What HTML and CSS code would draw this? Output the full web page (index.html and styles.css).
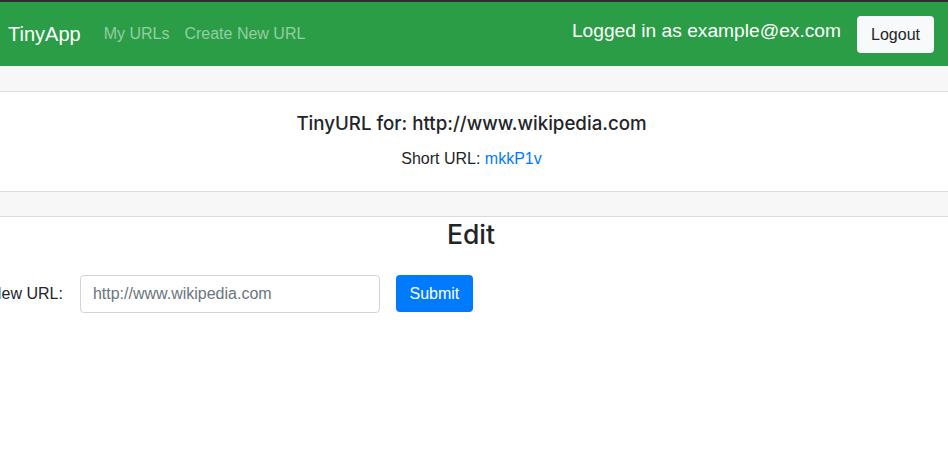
FILE: index.html
```html
<!DOCTYPE html>
<html>
<head>
<meta charset="utf-8">
<link rel="stylesheet" href="styles.css">
</head>
<body>
<nav class="navbar">
  <div class="nav-left">
    <a class="brand" href="#">TinyApp</a>
    <a class="nav-link" href="#">My URLs</a>
    <a class="nav-link" href="#">Create New URL</a>
  </div>
  <div class="nav-right">
    <span class="user">Logged in as example@ex.com</span>
    <button class="btn btn-light">Logout</button>
  </div>
</nav>
<div class="card">
  <div class="card-header"></div>
  <div class="card-body">
    <h5 class="card-title">TinyURL for: http://www.wikipedia.com</h5>
    <p class="card-text">Short URL: <a href="#">mkkP1v</a></p>
  </div>
  <div class="card-footer"></div>
</div>
<main class="edit">
  <h3 class="edit-title">Edit</h3>
  <form class="edit-form">
    <label class="label">New URL:</label>
    <input class="input" type="text" placeholder="http://www.wikipedia.com">
    <button class="btn btn-primary" type="button">Submit</button>
  </form>
</main>
</body>
</html>
```
FILE: styles.css
```css
html, body {
  margin: 0;
  padding: 0;
  background: #fff;
  overflow: hidden;
}
body {
  font-family: "Liberation Sans", Arial, sans-serif;
  font-size: 16px;
  line-height: 1.5;
  color: #212529;
}
a { text-decoration: none; }

.navbar {
  display: flex;
  align-items: center;
  justify-content: space-between;
  height: 64px;
  border-top: 2px solid #2c2c30;
  background: #2a9d46;
  padding: 0 14px 0 8px;
}
.nav-left { display: flex; align-items: center; }
.brand {
  color: #fff;
  font-size: 20px;
  margin-right: 23px;
}
.nav-link {
  color: rgba(255,255,255,.5);
  font-size: 16px;
  margin-right: 15px;
}
.nav-right { display: flex; align-items: center; }
.user {
  color: #fff;
  font-size: 19.2px;
  margin-right: 16px;
  margin-top: -6px;
}
.btn {
  font-family: inherit;
  font-size: 16px;
  line-height: 1.5;
  padding: 6px 12px;
  border-radius: 4px;
  border: 1px solid transparent;
}
.btn-light {
  background: #f8f9fa;
  color: #212529;
  width: 77px;
  height: 37px;
}
.btn-primary {
  background: #007bff;
  color: #fff;
  width: 77px;
  height: 37px;
}

.card-header {
  height: 25px;
  background: #f7f7f7;
  border-bottom: 1px solid #dcdcdc;
}
.card-body {
  height: 99px;
  text-align: center;
  box-sizing: border-box;
  padding-top: 21px;
}
.card-title {
  margin: 0 0 12px;
  font-family: "Inter", "Liberation Sans", sans-serif;
  font-size: 18.7px;
  font-weight: 500;
  line-height: 1.2;
  padding-right: 5px;
}
.card-text { margin: 0; padding-right: 5px; }
.card-text a { color: #007bff; }
.card-footer {
  height: 24px;
  background: #f7f7f7;
  border-top: 1px solid #dcdcdc;
  border-bottom: 1px solid #dcdcdc;
}

.edit { padding-top: 2px; }
.edit-title {
  margin: 0;
  text-align: center;
  font-family: "Inter", "Liberation Sans", sans-serif;
  font-size: 26.5px;
  font-weight: 500;
  line-height: 1.2;
  padding-right: 6px;
}
.edit-form {
  display: flex;
  align-items: center;
  margin-top: 24px;
  margin-left: -10px;
}
.label { margin-right: 17px; }
.input {
  box-sizing: border-box;
  width: 300px;
  height: 38px;
  border: 1px solid #ced4da;
  border-radius: 4px;
  padding: 6px 12px;
  font-family: inherit;
  font-size: 16px;
  color: #495057;
  margin-right: 16px;
}
.input::placeholder { color: #6c757d; opacity: 1; }
```
